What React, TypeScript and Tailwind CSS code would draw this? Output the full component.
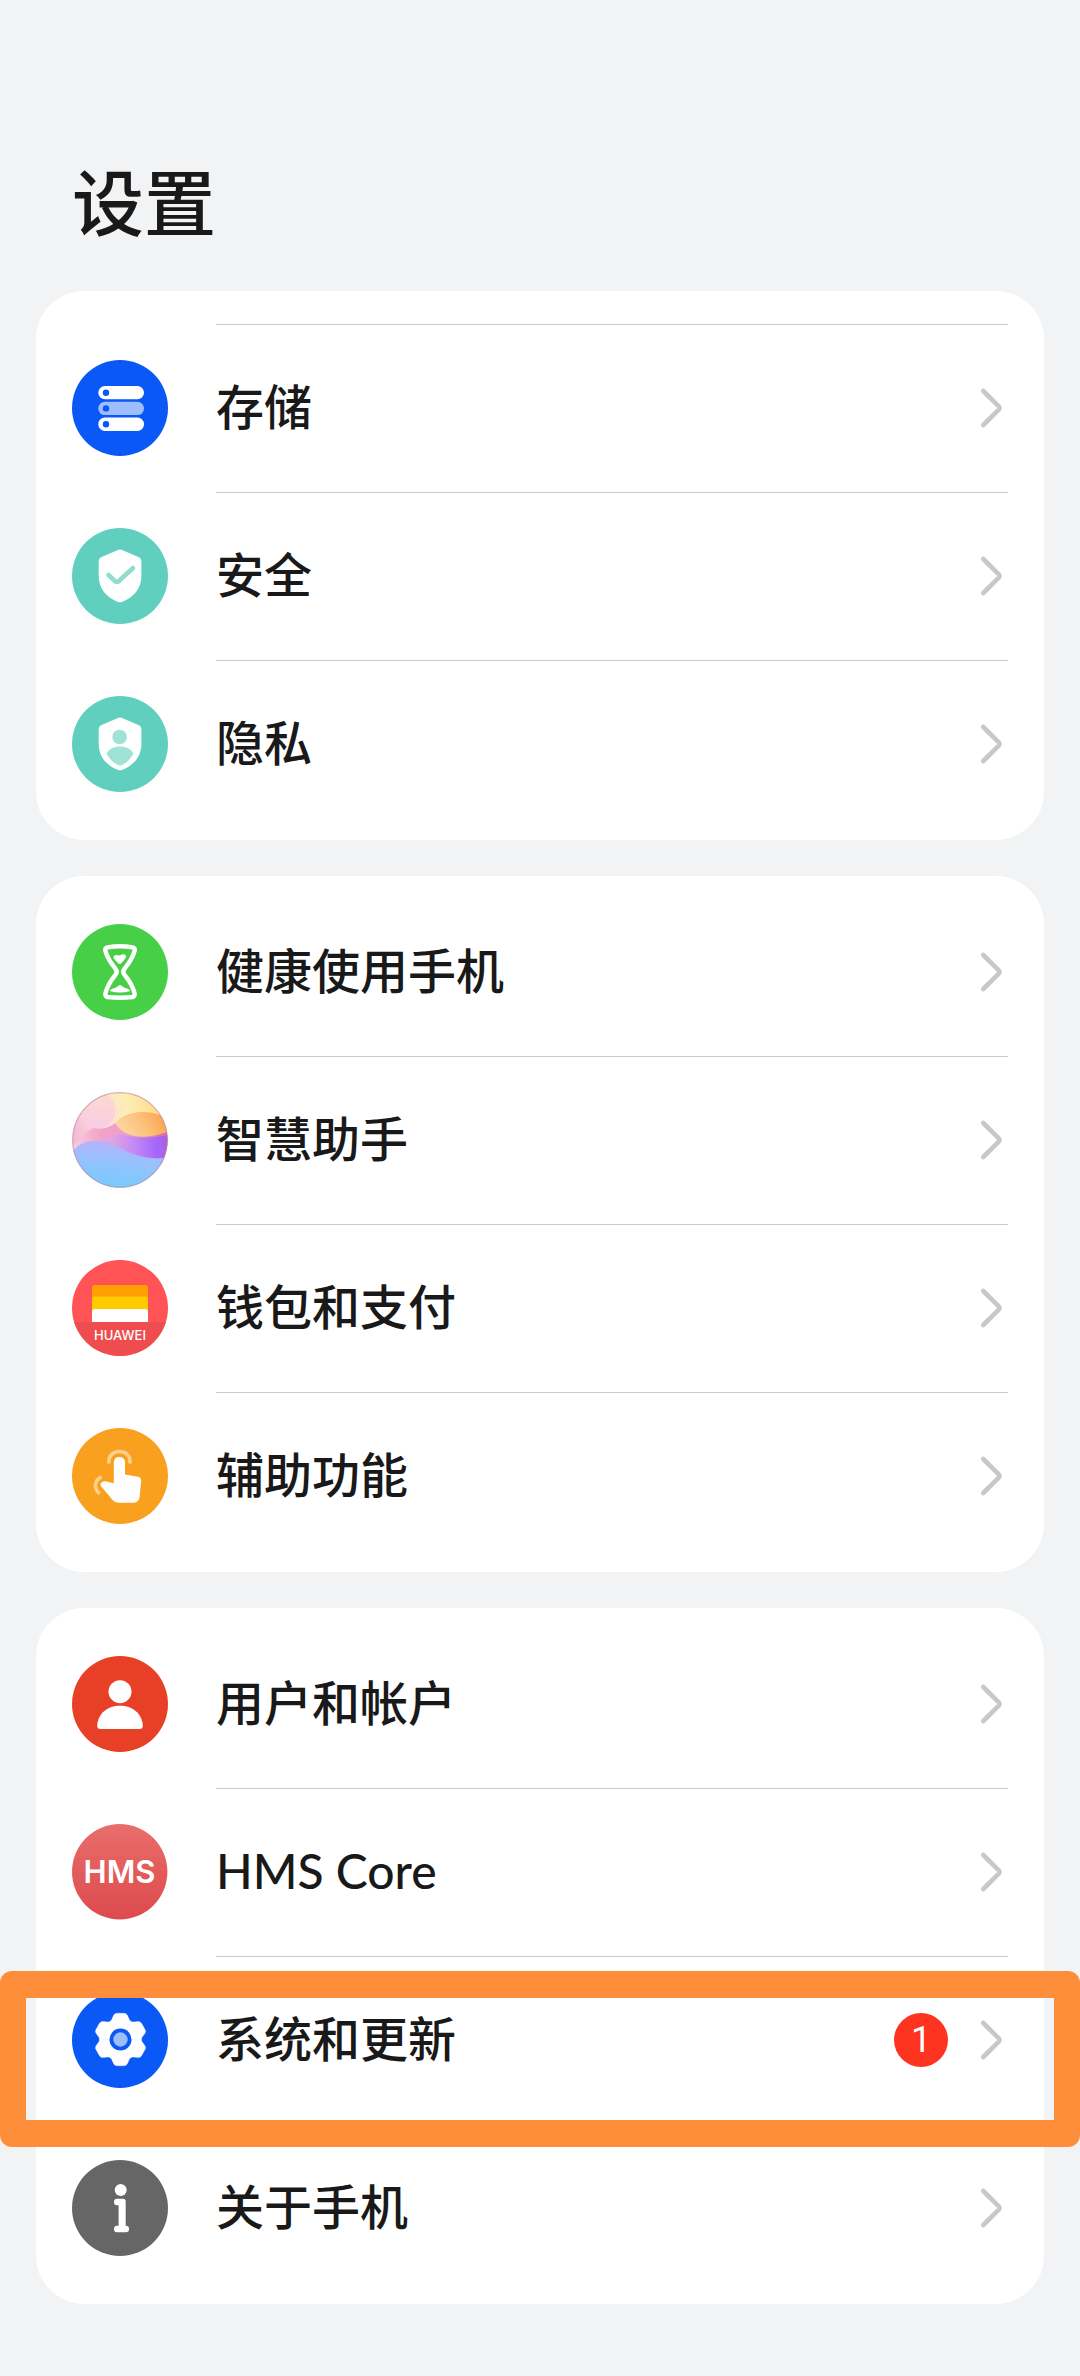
import { ReactNode } from "react";

interface SettingItem {
    name: string;
    icon: ReactNode;
    badge?: number;
    highlighted?: boolean;
}

const SHIELD = "M46 22Q48 21 50 22L67 29.3Q69.4 30.4 69.4 33V48C69.4 60 62 69.3 50.5 73.7Q48 74.7 45.5 73.7C34 69.3 26.7 60 26.7 48V33Q26.7 30.4 29 29.3Z";

function StorageIcon() {
    return (
        <svg viewBox="0 0 96 96" className="size-24">
            <circle cx="48" cy="48" r="48" fill="#0a59f7" />
            <rect x="26.3" y="26" width="45.7" height="13.3" rx="6.6" fill="#fff" />
            <rect x="26.3" y="41.8" width="45.7" height="13.3" rx="6.6" fill="#9dbdfc" />
            <rect x="26.3" y="57.6" width="45.7" height="13.3" rx="6.6" fill="#fff" />
            <circle cx="34" cy="32.7" r="3.2" fill="#0a59f7" />
            <circle cx="34" cy="48.4" r="3.2" fill="#0a59f7" />
            <circle cx="34" cy="64.2" r="3.2" fill="#0a59f7" />
        </svg>
    );
}

function SecurityIcon() {
    return (
        <svg viewBox="0 0 96 96" className="size-24">
            <circle cx="48" cy="48" r="48" fill="#61cfbe" />
            <path d={SHIELD} fill="#fff" />
            <path d="M36.5 47L43.4 53.4Q45 54.6 46.6 53.2L61 40" fill="none" stroke="#90ddcf" strokeWidth="4.5" strokeLinecap="round" />
        </svg>
    );
}

function PrivacyIcon() {
    return (
        <svg viewBox="0 0 96 96" className="size-24">
            <circle cx="48" cy="48" r="48" fill="#61cfbe" />
            <path d={SHIELD} fill="#fff" />
            <circle cx="47.6" cy="41" r="7.3" fill="#a0e2d6" />
            <path d="M34.6 57.5C37 53 42 50.5 48 50.5S59 53 61.3 57.5C59 63 54 67.5 48 69.8C42 67.5 37 63 34.6 57.5Z" fill="#a0e2d6" />
        </svg>
    );
}

function HourglassIcon() {
    return (
        <svg viewBox="0 0 96 96" className="size-24">
            <circle cx="48" cy="48" r="48" fill="#47cf47" />
            <path
                d="M35.5 23.3Q48 21.3 60.5 23.3Q63.5 23.8 62.6 26.8C60 36 56 40 52.3 45Q50.3 47.7 52.3 50.5C56 55.5 60.5 60 62.6 69.5Q63.2 72.5 60.5 73Q48 74.500 35.5 73Q32.8 72.5 33.4 69.5C35.5 60 40 55.5 43.7 50.5Q45.7 47.7 43.7 45C40 40 36 36 33.4 26.800Q32.5 23.8 35.5 23.3Z"
                fill="none" stroke="#fff" strokeWidth="4.4"
            />
            <path d="M41.3 33Q42 30.8 45 31Q47.5 32 50 30.4Q53.8 30 54.2 32.6Q53.5 35 49 39.5Q47.8 40.5 46.5 39.5Q42 35.5 41.3 33Z" fill="#fff" />
            <path d="M37.6 67Q38 65.5 41 64.5Q44.5 63.8 46.5 61.7Q48 60.5 49.5 61.7Q51.5 63.8 55 64.5Q58 65.5 58.4 67Q48 70 37.6 67Z" fill="#fff" />
        </svg>
    );
}

function AssistantIcon() {
    return (
        <svg viewBox="0 0 96 96" className="size-24">
            <defs>
                <clipPath id="sphere"><circle cx="48" cy="48" r="47.5" /></clipPath>
                <linearGradient id="sky" x1="0" y1="0.4" x2="1" y2="0.1">
                    <stop offset="0" stopColor="#f5b9d6" />
                    <stop offset="0.3" stopColor="#fbdcd9" />
                    <stop offset="0.6" stopColor="#fdeeb5" />
                    <stop offset="1" stopColor="#fbd57c" />
                </linearGradient>
                <linearGradient id="blob" x1="0" y1="0" x2="0.2" y2="1">
                    <stop offset="0" stopColor="#fbdccb" />
                    <stop offset="1" stopColor="#f9cbe4" />
                </linearGradient>
                <linearGradient id="rose" x1="0" y1="0" x2="1" y2="0">
                    <stop offset="0" stopColor="#f8cde2" />
                    <stop offset="0.3" stopColor="#f3a3c6" />
                    <stop offset="0.6" stopColor="#ee9bcb" />
                    <stop offset="1" stopColor="#df6c9e" />
                </linearGradient>
                <linearGradient id="dune" x1="0" y1="0.6" x2="1" y2="0.3">
                    <stop offset="0" stopColor="#fbd9a6" />
                    <stop offset="0.5" stopColor="#fcc27c" />
                    <stop offset="1" stopColor="#faa04a" />
                </linearGradient>
                <linearGradient id="violet" x1="0" y1="0" x2="1" y2="0">
                    <stop offset="0.25" stopColor="#e3a6e0" />
                    <stop offset="0.55" stopColor="#c48af3" />
                    <stop offset="0.85" stopColor="#a566fb" />
                    <stop offset="1" stopColor="#ac5fe0" />
                </linearGradient>
                <linearGradient id="sea" x1="0.6" y1="0" x2="0.4" y2="1">
                    <stop offset="0" stopColor="#b9b0fb" />
                    <stop offset="0.5" stopColor="#93c3fd" />
                    <stop offset="1" stopColor="#74cbfd" />
                </linearGradient>
            </defs>
            <g clipPath="url(#sphere)">
                <rect width="96" height="96" fill="url(#sky)" />
                <path d="M0 54C8 48 14 38 22 36C30 38 38 35 43 31C54 42 76 48 96 39V72H0Z" fill="url(#rose)" />
                <circle cx="25" cy="18" r="18.500" fill="url(#blob)" opacity="0.9" />
                <path d="M43 31C48 25 58 20 70 20C82 20 90 23 96 28V38.500C82 46 66 46 56 42C50 39.500 46 36 43 31Z" fill="url(#dune)" />
                <path d="M20 50C32 47 38 43 50 42.500C66 47 82 46 96 43V72H40Z" fill="url(#violet)" />
                <path d="M0 60C6 52 14 49 24 49C40 49 48 57 61 62C74 66.500 84 67 96 65.500V96H0Z" fill="url(#sea)" />
            </g>
            <circle cx="48" cy="48" r="47.3" fill="none" stroke="#c0839a" strokeOpacity="0.6" strokeWidth="1.200" />
        </svg>
    );
}

function WalletIcon() {
    return (
        <svg viewBox="0 0 96 96" className="size-24">
            <defs>
                <clipPath id="wallet"><circle cx="48" cy="48" r="48" /></clipPath>
            </defs>
            <g clipPath="url(#wallet)">
                <rect width="96" height="96" fill="#ff5355" />
                <rect y="62" width="96" height="34" fill="#ee4c4f" />
            </g>
            <path d="M20 62V28Q20 25 23 25H73Q76 25 76 28V62Z" fill="#ff9f00" />
            <path d="M20 62V39.5Q20 36.5 23 36.5H73Q76 36.5 76 39.5V62Z" fill="#ffca00" />
            <path d="M20 62V52Q20 49 23 49H73Q76 49 76 52V62Z" fill="#fff" />
            <text x="48" y="80" textAnchor="middle" fill="#fff" className="font-[Inter,sans-serif] text-[13px] font-medium">HUAWEI</text>
        </svg>
    );
}

function AccessibilityIcon() {
    return (
        <svg viewBox="0 0 96 96" className="size-24">
            <circle cx="48" cy="48" r="48" fill="#f9a11f" />
            <path d="M41.8 34.7Q41.8 29 47.4 29T53 34.7V46.5L66 48.8Q69.5 49.6 69.2 53L67.6 69Q67 74.7 61.5 74.7H47Q43.5 74.7 41 72.4L29.3 58.5Q27.6 56.2 29.6 54.5Q31.6 52.8 34.5 53.5L41.8 55.2Z" fill="#fff" />
            <path d="M37 35.5C36 28 41 23.5 47.4 23.5S59 28 57.8 35.5" fill="none" stroke="#fdd08b" strokeWidth="3.6" />
            <path d="M29.5 48.8C22 52 21.5 61 27.8 65.8" fill="none" stroke="#fdd08b" strokeWidth="3.6" />
        </svg>
    );
}

function UserIcon() {
    return (
        <svg viewBox="0 0 96 96" className="size-24">
            <circle cx="48" cy="48" r="48" fill="#e84026" />
            <circle cx="48" cy="35.7" r="11.5" fill="#fff" />
            <path d="M28.5 73Q25 73 25.2 69.5C26 57 36 49.7 48 49.7S70 57 70.8 69.5Q71 73 67.5 73Z" fill="#fff" />
        </svg>
    );
}

function HmsIcon() {
    return (
        <svg viewBox="0 0 96 96" className="size-24">
            <defs>
                <linearGradient id="hms" x1="0" y1="0" x2="0" y2="1">
                    <stop offset="0" stopColor="#e86e6b" />
                    <stop offset="1" stopColor="#dd4a4d" />
                </linearGradient>
            </defs>
            <circle cx="47.7" cy="47.7" r="47.7" fill="url(#hms)" />
            <text x="47.5" y="59" textAnchor="middle" fill="#fff" className="font-[Inter,sans-serif] text-[31px] font-semibold">HMS</text>
        </svg>
    );
}

function SystemIcon() {
    return (
        <svg viewBox="0 0 96 96" className="size-24">
            <circle cx="48" cy="48" r="48" fill="#0a59f7" />
            <g transform="translate(48.5 47.5)">
                {[0, 60, 120, 180, 240, 300].map((angle) => (
                    <path key={angle} transform={`rotate(${angle})`} d="M0 0L-10.6 -18Q-9.4 -18.6 -8.8 -20L-7 -24Q-6 -26.3 -3.5 -26.3H3.5Q6 -26.3 7 -24L8.8 -20Q9.4 -18.6 10.6 -18Z" fill="#fff" stroke="#fff" strokeWidth="0.3" />
                ))}
                <circle r="11" fill="#0a59f7" />
                <circle r="7.2" fill="#9dbdfc" />
            </g>
        </svg>
    );
}

function AboutIcon() {
    return (
        <svg viewBox="0 0 96 96" className="size-24">
            <circle cx="48" cy="48" r="48" fill="#666" />
            <circle cx="48.7" cy="30" r="6" fill="#fff" />
            <path d="M45 38.7H51Q53.7 38.7 53.7 41.5V65.7H54Q57 65.7 57 69T54 72.3H45Q42 72.3 42 69T45 65.7H46.6V45.3H45Q42 45.3 42 42T45 38.7Z" fill="#fff" />
        </svg>
    );
}

function ArrowIcon() {
    return (
        <svg viewBox="0 0 36 48" className="h-12 w-9" fill="none" stroke="#c8c8c8" strokeWidth="4.6" strokeLinecap="round" strokeLinejoin="round">
            <path d="M11.300 7L26.500 22.200Q28.300 24 26.500 25.800L11.300 41" />
        </svg>
    );
}

const storageGroup: SettingItem[] = [
    { name: "存储", icon: <StorageIcon /> },
    { name: "安全", icon: <SecurityIcon /> },
    { name: "隐私", icon: <PrivacyIcon /> },
];

const serviceGroup: SettingItem[] = [
    { name: "健康使用手机", icon: <HourglassIcon /> },
    { name: "智慧助手", icon: <AssistantIcon /> },
    { name: "钱包和支付", icon: <WalletIcon /> },
    { name: "辅助功能", icon: <AccessibilityIcon /> },
];

const systemGroup: SettingItem[] = [
    { name: "用户和帐户", icon: <UserIcon /> },
    { name: "HMS Core", icon: <HmsIcon /> },
    { name: "系统和更新", icon: <SystemIcon />, badge: 1, highlighted: true },
    { name: "关于手机", icon: <AboutIcon /> },
];

function SettingRow({ item, divider }: { item: SettingItem; divider: boolean }) {
    return (
        <li className="relative">
            <button type="button" className="flex h-[168px] w-full items-center gap-12 px-9 text-left">
                {item.icon}
                <span className={`flex h-full flex-1 items-center gap-6 border-y border-b-transparent ${divider ? "border-t-[#cbcbcb]" : "border-t-transparent"}`}>
                    <span className="flex-1 pb-0.5 text-5xl font-medium">{item.name}</span>
                    {item.badge && (
                        <span className="flex size-[54px] items-center justify-center rounded-full bg-[#fe3320] font-[Roboto,sans-serif] text-4xl text-white">
                            {item.badge}
                        </span>
                    )}
                    <ArrowIcon />
                </span>
            </button>
            {item.highlighted && (
                <div className="pointer-events-none absolute -inset-x-9 -bottom-[23px] top-[15px] z-10 rounded-xl border-x-26 border-y-27 border-[#ff8e3a]" />
            )}
        </li>
    );
}

function SettingGroup({ items, continued = false }: { items: SettingItem[]; continued?: boolean }) {
    return (
        <ul className={`rounded-[48px] bg-white pb-3 ${continued ? "pt-[33px]" : "pt-3"}`}>
            {items.map((item, index) => (
                <SettingRow key={item.name} item={item} divider={continued || index > 0} />
            ))}
        </ul>
    );
}

export default function App() {
    return (
        <div className="min-h-screen bg-[#f1f3f5] font-[Lato,'Noto_Sans_CJK_SC',sans-serif] text-[#191919]">
            <header className="px-[72px] pt-[154px] pb-[41px]">
                <h1 className="text-7xl leading-[96px] font-medium">设置</h1>
            </header>
            <main className="flex flex-col gap-9 px-9 pb-[72px]">
                <SettingGroup items={storageGroup} continued />
                <SettingGroup items={serviceGroup} />
                <SettingGroup items={systemGroup} />
            </main>
        </div>
    );
}
